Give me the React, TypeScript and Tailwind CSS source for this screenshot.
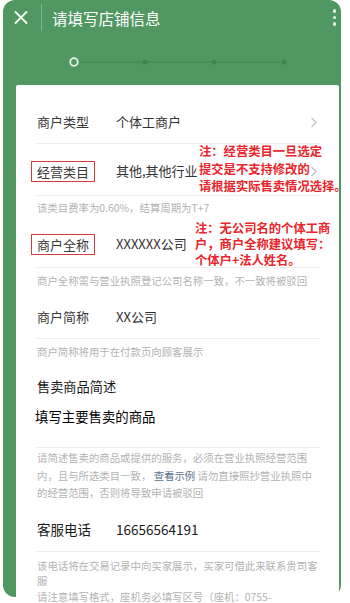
import React from "react";

const font = { fontFamily: '"Noto Sans CJK SC", "Noto Sans", sans-serif' };

function Chevron() {
  return (
    <svg width="8" height="11" viewBox="0 0 8 11" className="ml-auto mr-[2px]">
      <path d="M1.5 1 L6 5.5 L1.5 10" fill="none" stroke="#c4c4c4" strokeWidth="1.3" />
    </svg>
  );
}

function Divider() {
  return <div className="h-px bg-[#ececec]" />;
}

export default function App() {
  return (
    <div className="h-[603px] w-[350px] overflow-hidden bg-white" style={font}>
      <div className="ml-[3px] flex h-[597px] w-[338px] flex-col rounded-[12px] bg-[#509762]">
        {/* header */}
        <div className="flex h-[35px] shrink-0 items-center">
          <svg width="14" height="13" viewBox="0 0 14 13" className="ml-[11px]">
            <path d="M1.5 1 L12.5 12 M12.5 1 L1.5 12" stroke="#f4fbf5" strokeWidth="1.8" strokeLinecap="round" />
          </svg>
          <div className="ml-[13px] h-[27px] w-px bg-[#7fb58d]" />
          <div className="ml-[10px] text-[15.5px] leading-[20px] text-white">请填写店铺信息</div>
          <div className="ml-auto mr-[5px] flex flex-col gap-[3px]">
            <div className="h-[3.5px] w-[3.5px] rounded-full bg-[#e2f3e5]" />
            <div className="h-[3.5px] w-[3.5px] rounded-full bg-[#e2f3e5]" />
            <div className="h-[3.5px] w-[3.5px] rounded-full bg-[#e2f3e5]" />
          </div>
        </div>
        {/* steps */}
        <svg width="338" height="50" viewBox="0 0 338 50" className="block shrink-0">
          <line x1="75" y1="27" x2="281" y2="27" stroke="#3e8550" strokeWidth="1.2" />
          <circle cx="142" cy="27" r="2.6" fill="#3e8550" />
          <circle cx="211" cy="27" r="2.6" fill="#3e8550" />
          <circle cx="281" cy="27" r="2.6" fill="#3e8550" />
          <circle cx="71" cy="27" r="3.8" fill="#509762" stroke="#e6f6e9" strokeWidth="1.8" />
        </svg>
        {/* card */}
        <div className="ml-[13px] w-[323px] shrink-0 rounded-[2px] bg-white pl-[21px] pr-[19px] text-[13px] text-[#333]">
          {/* row1 */}
          <div className="flex h-[58px] items-center pt-[16px]">
            <div className="w-[79px] text-[#3a3a3a]">商户类型</div>
            <div>个体工商户</div>
            <Chevron />
          </div>
          <Divider />
          {/* row2 */}
          <div className="relative flex h-[51px] items-center pt-[3px]">
            <div className="w-[79px]">
              <span className="-ml-[6px] inline-block border border-[#d9383c] px-[5px] leading-[19px] text-[#3a3a3a]">经营类目</span>
            </div>
            <div>其他,其他行业</div>
            <Chevron />
            <div className="absolute left-[162px] top-[-1px] whitespace-nowrap text-[12.3px] font-bold leading-[17.5px] text-[#e8262b]">
              注：经营类目一旦选定
              <br />
              提交是不支持修改的
              <br />
              请根据实际售卖情况选择。
            </div>
          </div>
          <Divider />
          <div className="h-[26px] pt-[5px] text-[10.4px] leading-[14px] text-[#b3b3b3]">该类目费率为0.60%，结算周期为T+7</div>
          {/* row3 */}
          <div className="relative flex h-[45px] items-center pb-[1px]">
            <div className="w-[79px]">
              <span className="-ml-[6px] inline-block border border-[#d9383c] px-[5px] leading-[19px] text-[#3a3a3a]">商户全称</span>
            </div>
            <div>XXXXXX公司</div>
            <div className="absolute left-[158px] top-[-2px] whitespace-nowrap text-[12.3px] font-bold leading-[16px] text-[#e8262b]">
              注：无公司名的个体工商
              <br />
              户，商户全称建议填写：
              <br />
              个体户+法人姓名。
            </div>
          </div>
          <Divider />
          <div className="h-[27px] pt-[6px] text-[10.4px] leading-[14px] text-[#b3b3b3]">商户全称需与营业执照登记公司名称一致，不一致将被驳回</div>
          {/* row4 */}
          <div className="flex h-[43px] items-center">
            <div className="w-[79px] text-[#3a3a3a]">商户简称</div>
            <div>XX公司</div>
          </div>
          <Divider />
          <div className="h-[28px] pt-[6px] text-[10.4px] leading-[14px] text-[#b3b3b3]">商户简称将用于在付款页向顾客展示</div>
          <div className="h-[30px] pt-[12px] text-[13.2px] leading-[16px] text-[#1a1a1a]">售卖商品简述</div>
          <div className="-ml-[2px] h-[50px] pt-[11px] text-[13.4px] leading-[16px] text-[#000]">填写主要售卖的商品</div>
          <Divider />
          <div className="pt-[1px] text-[10.4px] leading-[17.5px] text-[#b3b3b3]">
            请简述售卖的商品或提供的服务，必须在营业执照经营范围
            <br />
            内，且与所选类目一致， <span className="text-[#5b6f8f]">查看示例</span> 请勿直接照抄营业执照中
            <br />
            的经营范围，否则将导致申请被驳回
          </div>
          {/* row5 */}
          <div className="flex h-[49px] items-center pt-[6px]">
            <div className="w-[79px] text-[13.5px] text-[#1a1a1a]">客服电话</div>
            <div className="text-[13.5px] text-[#1a1a1a]">16656564191</div>
          </div>
          <Divider />
          <div className="pt-[6px] text-[10.4px] leading-[15.5px] text-[#b3b3b3]">
            该电话将在交易记录中向买家展示，买家可借此来联系贵司客
            <br />
            服
            <br />
            请注意填写格式，座机务必填写区号（座机：0755-
          </div>
        </div>
      </div>
    </div>
  );
}
